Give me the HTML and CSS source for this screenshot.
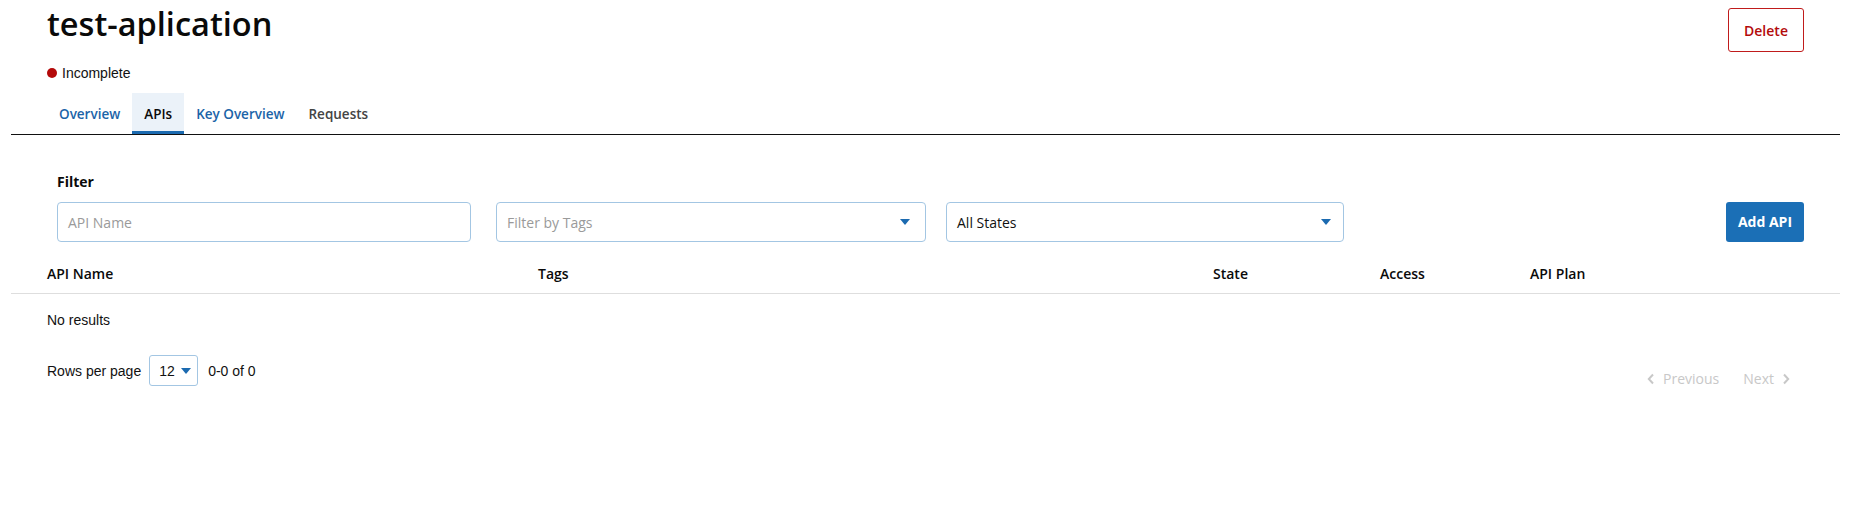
FILE: index.html
```html
<!DOCTYPE html>
<html lang="en">
<head>
<meta charset="utf-8">
<title>test-aplication</title>
<link rel="stylesheet" href="styles.css">
</head>
<body>
<div class="page">
  <header class="app-header">
    <div class="title-block">
      <h1 class="title">test-aplication</h1>
      <div class="status"><span class="status-dot"></span><span>Incomplete</span></div>
    </div>
    <button class="btn-delete" type="button">Delete</button>
  </header>

  <nav class="tabs">
    <a class="tab tab-link">Overview</a>
    <a class="tab tab-active">APIs</a>
    <a class="tab tab-link">Key Overview</a>
    <a class="tab tab-muted">Requests</a>
  </nav>

  <section class="filters">
    <div class="filter-label">Filter</div>
    <div class="filter-row">
      <div class="field field-name"><span class="placeholder">API Name</span></div>
      <div class="field field-tags"><span class="placeholder">Filter by Tags</span><svg class="caret" width="10" height="6" viewBox="0 0 10 6"><path d="M0 0h10L5 6z" fill="#1b6ab0"/></svg></div>
      <div class="field field-state"><span class="value">All States</span><svg class="caret caret-state" width="10" height="6" viewBox="0 0 10 6"><path d="M0 0h10L5 6z" fill="#1b6ab0"/></svg></div>
      <div class="spacer"></div>
      <button class="btn-add" type="button">Add API</button>
    </div>
  </section>

  <div class="table">
    <div class="thead">
      <div class="col col-name">API Name</div>
      <div class="col col-tags">Tags</div>
      <div class="col col-state">State</div>
      <div class="col col-access">Access</div>
      <div class="col col-plan">API Plan</div>
    </div>
    <div class="empty">No results</div>
  </div>

  <div class="pagination">
    <div class="rows">
      <span>Rows per page</span>
      <div class="rows-select"><span>12</span><svg width="10" height="6" viewBox="0 0 10 6"><path d="M0 0h10L5 6z" fill="#1b6ab0"/></svg></div>
      <span>0-0 of 0</span>
    </div>
    <div class="pager">
      <span class="pager-btn"><svg width="8" height="12" viewBox="0 0 8 12"><path d="M6 1.5L1.8 6 6 10.5" fill="none" stroke="#c8c8c8" stroke-width="2"/></svg>Previous</span>
      <span class="pager-btn">Next<svg width="8" height="12" viewBox="0 0 8 12"><path d="M2 1.5L6.2 6 2 10.5" fill="none" stroke="#c8c8c8" stroke-width="2"/></svg></span>
    </div>
  </div>
</div>
</body>
</html>
```

FILE: styles.css
```css
* { box-sizing: border-box; }
html, body { margin: 0; background: #fff; }
body {
  font-family: "Open Sans", "Liberation Sans", Arial, sans-serif;
  font-size: 14px;
  color: #111;
}
.page {
  padding: 0 13px 0 11px;
}
.app-header {
  display: flex;
  justify-content: space-between;
  align-items: flex-start;
  padding: 0 36px;
}
.title {
  margin: 0;
  padding-top: 4px;
  font-size: 32.5px;
  line-height: 40px;
  font-weight: 600;
  color: #0a0a0a;
}
.status {
  margin-top: 19px;
  display: flex;
  align-items: center;
  gap: 5px;
  font-family: "Liberation Sans", Arial, sans-serif;
  font-size: 14px;
  line-height: 20px;
  color: #111;
}
.status-dot {
  width: 10px;
  height: 10px;
  border-radius: 50%;
  background: #b40a0a;
}
.btn-delete {
  margin-top: 8px;
  width: 76px;
  height: 44px;
  border: 1px solid #c01b1b;
  border-radius: 3px;
  background: #fff;
  color: #b30b0b;
  font-family: "Open Sans", sans-serif;
  font-size: 14px;
  font-weight: 600;
}
.tabs {
  margin-top: 10px;
  display: flex;
  padding: 0 36px;
  border-bottom: 1px solid #111;
}
.tab {
  height: 41px;
  padding: 0 12px;
  display: flex;
  align-items: center;
  font-weight: 600;
  font-size: 13.5px;
  text-decoration: none;
}
.tab-link { color: #1b64a8; }
.tab-muted { color: #444; }
.tab-active {
  color: #0a0a0a;
  background: #ebf2f9;
  box-shadow: inset 0 -3px 0 #1b6ab0;
}
.filters {
  padding: 0 36px 0 46px;
}
.filter-label {
  margin-top: 37px;
  font-weight: 700;
  line-height: 20px;
  color: #0a0a0a;
}
.filter-row {
  margin-top: 10px;
  display: flex;
  align-items: center;
}
.field {
  height: 40px;
  border: 1px solid #a3c6e3;
  border-radius: 4px;
  display: flex;
  align-items: center;
  justify-content: space-between;
  padding: 0 15px 0 10px;
}
.field-name { width: 414px; }
.field-tags { width: 430px; margin-left: 25px; }
.field-state { width: 398px; margin-left: 20px; padding-right: 12px; }
.placeholder { color: #9a9a9a; }
.value { color: #111; }
.spacer { flex: 1; }
.btn-add {
  width: 78px;
  height: 40px;
  margin-top: -1px;
  border: 0;
  border-radius: 3px;
  background: #1b6fb6;
  color: #fff;
  font-family: "Open Sans", sans-serif;
  font-weight: 700;
  font-size: 14px;
}
.table {
  margin-top: 11px;
}
.thead {
  display: grid;
  grid-template-columns: 491px 675px 167px 150px 1fr;
  align-items: center;
  height: 41px;
  padding: 0 36px;
  border-bottom: 1px solid #dedede;
  font-weight: 600;
  color: #0a0a0a;
}
.empty {
  padding: 16px 36px 0;
  line-height: 20px;
  font-family: "Liberation Sans", Arial, sans-serif;
  color: #111;
}
.pagination {
  margin-top: 25px;
  padding: 0 36px;
  display: flex;
  justify-content: space-between;
  align-items: flex-start;
  font-family: "Liberation Sans", Arial, sans-serif;
  color: #111;
}
.rows {
  display: flex;
  align-items: center;
  height: 31px;
}
.rows-select {
  margin: 0 10px 0 8px;
  width: 49px;
  height: 31px;
  border: 1px solid #a3c6e3;
  border-radius: 3px;
  display: flex;
  align-items: center;
  gap: 6px;
  padding-left: 9px;
}
.pager {
  margin-top: 14px;
  margin-right: 14px;
  display: flex;
  gap: 24px;
  font-family: "Open Sans", sans-serif;
  color: #c8c8c8;
  line-height: 20px;
}
.pager-btn {
  display: flex;
  align-items: center;
  gap: 8px;
}
```
